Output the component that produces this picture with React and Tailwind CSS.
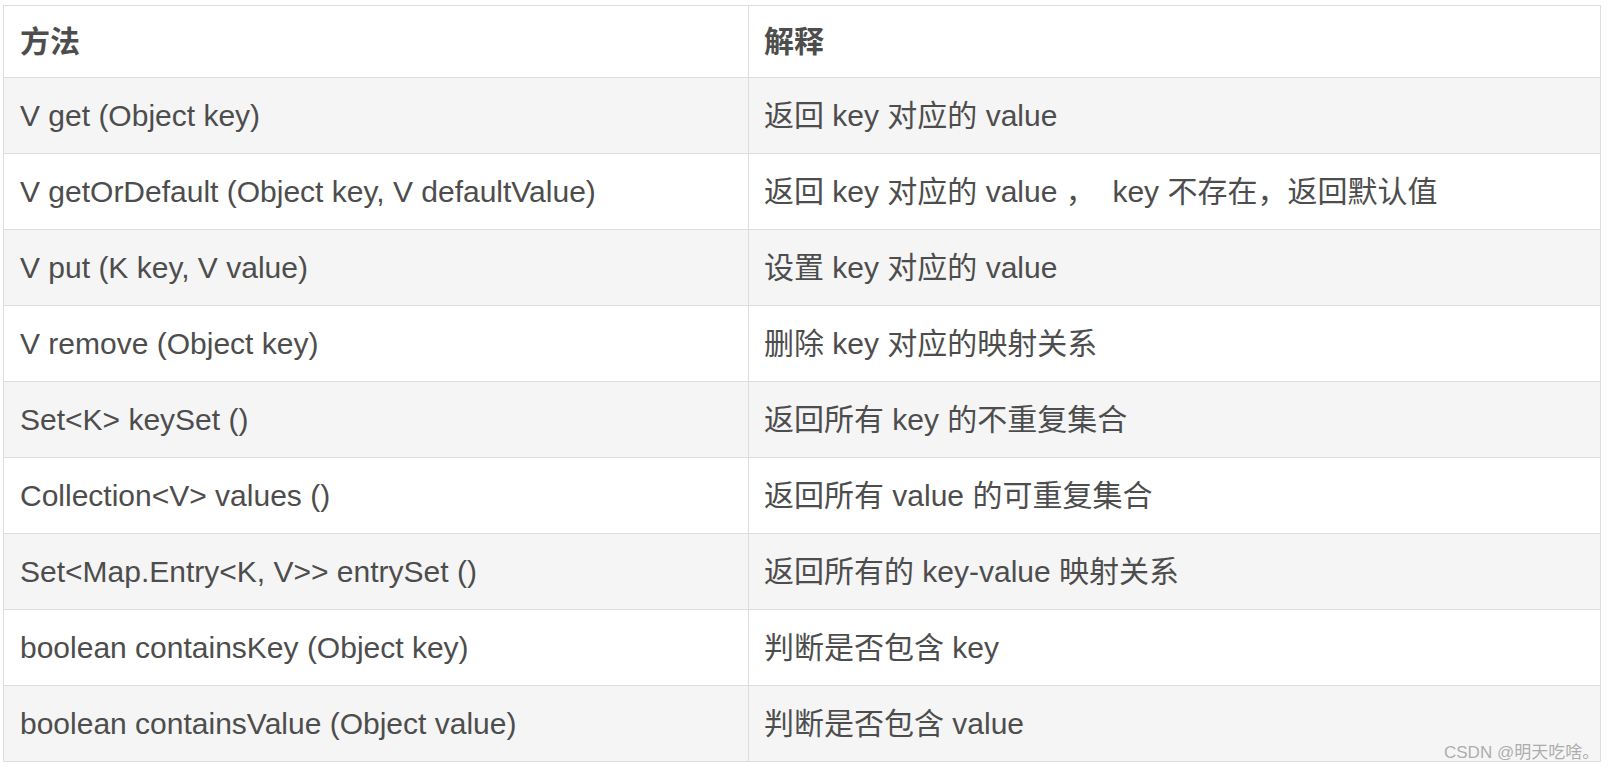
const rows = [
  ["V get (Object key)", "返回 key 对应的 value"],
  ["V getOrDefault (Object key, V defaultValue)", "返回 key 对应的 value ，  key 不存在，返回默认值"],
  ["V put (K key, V value)", "设置 key 对应的 value"],
  ["V remove (Object key)", "删除 key 对应的映射关系"],
  ["Set<K> keySet ()", "返回所有 key 的不重复集合"],
  ["Collection<V> values ()", "返回所有 value 的可重复集合"],
  ["Set<Map.Entry<K, V>> entrySet ()", "返回所有的 key-value 映射关系"],
  ["boolean containsKey (Object key)", "判断是否包含 key"],
  ["boolean containsValue (Object value)", "判断是否包含 value"],
];

export default function App() {
  return (
    <div
      className="relative w-[1618px] h-[774px] bg-white pt-[5px] pl-[3px] text-[#4d4d4d]"
      style={{ fontFamily: '"Liberation Sans", Arial, "Noto Sans CJK SC", sans-serif' }}
    >
      <div className="w-[1598px] border border-[#dddddd] text-[30px] leading-none">
        <div className="flex h-[71px] bg-white font-bold">
          <div className="w-[744px] flex items-center pl-4">方法</div>
          <div className="flex-1 flex items-center pl-[15px] border-l border-[#dddddd]">解释</div>
        </div>
        {rows.map(([a, b], i) => (
          <div
            key={i}
            className={
              "flex h-[76px] border-t border-[#dddddd] " +
              (i % 2 === 0 ? "bg-[#f5f5f5]" : "bg-white")
            }
          >
            <div className="w-[744px] flex items-center pl-4 whitespace-pre">{a}</div>
            <div className="flex-1 flex items-center pl-[15px] border-l border-[#dddddd] whitespace-pre">{b}</div>
          </div>
        ))}
      </div>
      <div
        className="absolute left-[1444px] top-[744px] text-[17px] leading-none text-[#999999]/80 whitespace-nowrap"
        style={{ fontFamily: '"Liberation Sans", "Noto Sans CJK SC", sans-serif' }}
      >
        CSDN @明天吃啥。
      </div>
    </div>
  );
}
